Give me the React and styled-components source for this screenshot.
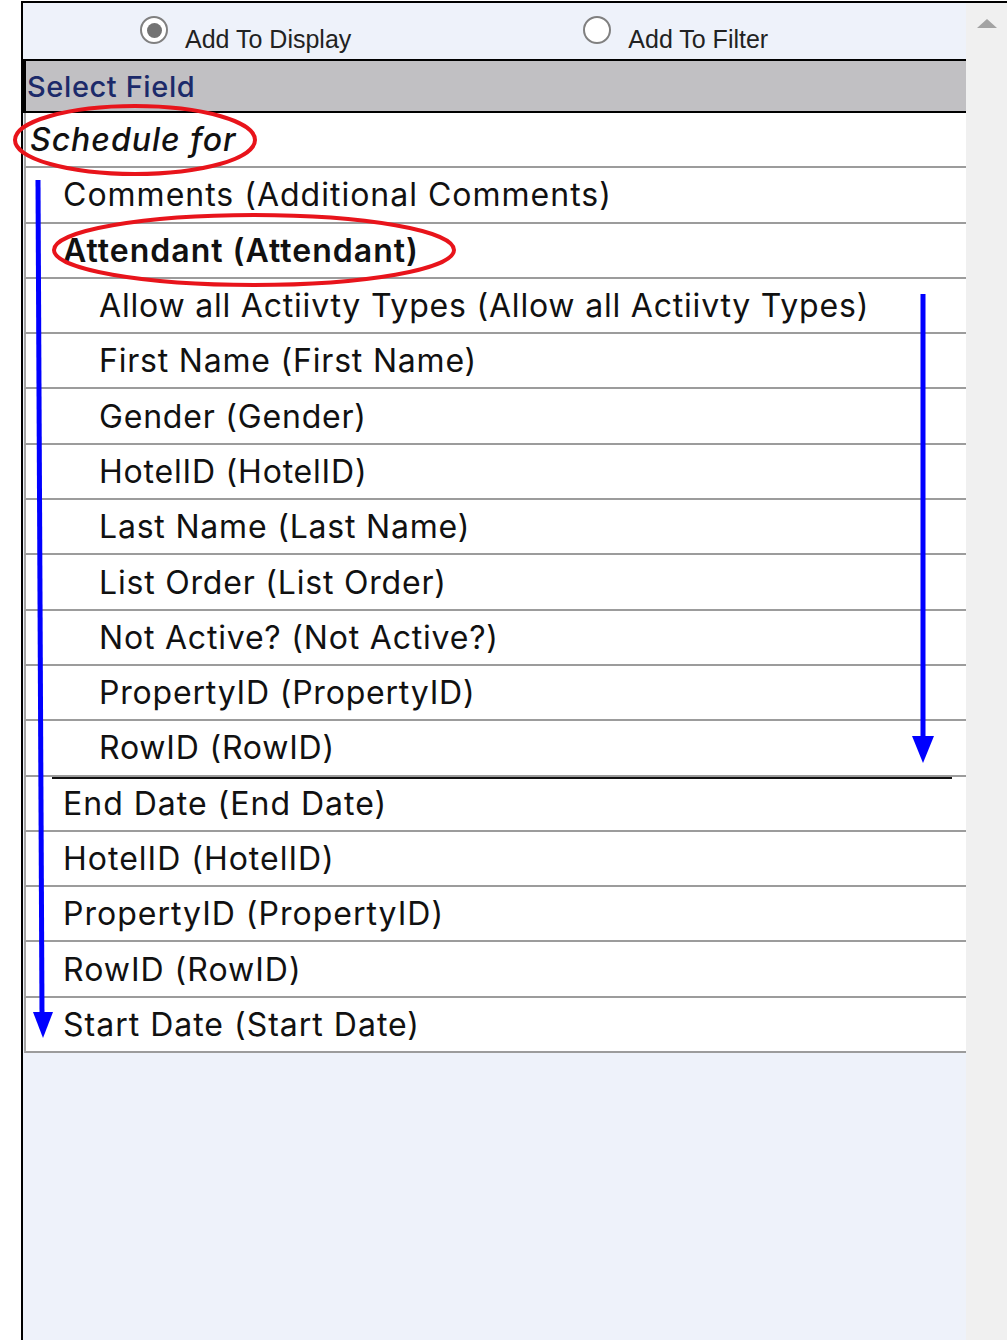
import styled, { createGlobalStyle } from "styled-components";

const GlobalStyle = createGlobalStyle`
  html, body {
    margin: 0;
    padding: 0;
    background: #ffffff;
  }
`;

const fields = [
  { label: "Schedule for", kind: "title" },
  { label: "Comments (Additional Comments)", level: 1 },
  { label: "Attendant (Attendant)", level: 1, bold: true },
];

const attendantFields = [
  "Allow all Actiivty Types (Allow all Actiivty Types)",
  "First Name (First Name)",
  "Gender (Gender)",
  "HotelID (HotelID)",
  "Last Name (Last Name)",
  "List Order (List Order)",
  "Not Active? (Not Active?)",
  "PropertyID (PropertyID)",
  "RowID (RowID)",
];

const scheduleFields = [
  "End Date (End Date)",
  "HotelID (HotelID)",
  "PropertyID (PropertyID)",
  "RowID (RowID)",
  "Start Date (Start Date)",
];

const App = () => {
  return (
    <Page>
      <GlobalStyle />
      <Frame>
        <Main>
          <RadioBar>
            <Option>
              <Radio checked />
              <OptionText>Add To Display</OptionText>
            </Option>
            <Option>
              <Radio />
              <OptionText>Add To Filter</OptionText>
            </Option>
          </RadioBar>
          <Header>Select Field</Header>
          <List>
            {fields.map((f) => (
              <Row key={f.label} level={f.level} kind={f.kind} bold={f.bold}>
                {f.label}
              </Row>
            ))}
            <Group>
              {attendantFields.map((label) => (
                <Row key={label} level={2}>
                  {label}
                </Row>
              ))}
            </Group>
            {scheduleFields.map((label) => (
              <Row key={label} level={1}>
                {label}
              </Row>
            ))}
          </List>
        </Main>
        <Scrollbar>
          <UpArrow />
        </Scrollbar>
      </Frame>

      {/* annotations drawn over the screenshot */}
      <Annotations width="1007" height="1340" viewBox="0 0 1007 1340">
        <ellipse cx="135" cy="140" rx="120" ry="34" fill="none" stroke="#e8141b" strokeWidth="4" />
        <ellipse cx="254" cy="250" rx="200" ry="35" fill="none" stroke="#e8141b" strokeWidth="4" />
        <line x1="38" y1="180" x2="42" y2="1014" stroke="#0000ff" strokeWidth="5" />
        <polygon points="33,1012 53,1012 43,1038" fill="#0000ff" />
        <line x1="923" y1="294" x2="923" y2="740" stroke="#0000ff" strokeWidth="5" />
        <polygon points="912,736 934,736 923,763" fill="#0000ff" />
      </Annotations>
    </Page>
  );
};

export default App;

const Page = styled.div`
  position: relative;
  width: 1007px;
  height: 1340px;
  padding: 1px 0 0 21px;
  box-sizing: border-box;
  overflow: hidden;
`;

const Frame = styled.div`
  display: flex;
  height: 1339px;
  border-top: 2px solid #000;
  border-left: 2px solid #000;
  box-sizing: border-box;
`;

const Main = styled.div`
  flex: 1;
  background: #eef2fa;
  display: flex;
  flex-direction: column;
`;

const RadioBar = styled.div`
  height: 56px;
  display: flex;
  align-items: flex-start;
  padding-left: 117px;
  gap: 232px;
`;

const Option = styled.label`
  display: flex;
  align-items: flex-start;
  gap: 17px;
`;

const OptionText = styled.span`
  padding-top: 24px;
  font-family: "Liberation Sans", Arial, sans-serif;
  font-size: 25px;
  line-height: 1;
  color: #222;
`;

const Radio = styled.span`
  margin-top: 13px;
  width: 28px;
  height: 28px;
  box-sizing: border-box;
  border-radius: 50%;
  border: 2px solid #808080;
  background: #fff;
  display: flex;
  align-items: center;
  justify-content: center;

  &::after {
    content: "";
    display: ${(p) => (p.checked ? "block" : "none")};
    width: 15px;
    height: 15px;
    border-radius: 50%;
    background: #737373;
  }
`;

const Header = styled.div`
  height: 50px;
  border-top: 2px solid #000;
  border-bottom: 2px solid #000;
  border-left: 3px solid #000;
  background: #c1c0c3;
  display: flex;
  align-items: center;
  padding-left: 1px;
  font-family: Inter, "Noto Sans", sans-serif;
  font-weight: 500;
  font-size: 29px;
  letter-spacing: 0.6px;
  color: #1c2a6a;
`;

const List = styled.div`
  margin-left: 1px;
`;

const Group = styled.div`
  position: relative;

  &::after {
    content: "";
    position: absolute;
    left: 28px;
    right: 14px;
    bottom: -2px;
    height: 2px;
    background: #111;
  }
`;

const Row = styled.div`
  height: 53.3px;
  background: #fff;
  border-left: 2px solid #a6a6a6;
  border-bottom: 2px solid #9c9c9c;
  display: flex;
  align-items: center;
  white-space: nowrap;
  font-family: Inter, "Noto Sans", sans-serif;
  font-size: 32px;
  letter-spacing: ${(p) => (p.level === 2 ? "0.8px" : "1px")};
  color: #111;
  padding-left: ${(p) =>
    p.kind === "title" ? "4px" : p.level === 2 ? "73px" : "37px"};
  font-weight: ${(p) => (p.bold ? 600 : p.kind === "title" ? 500 : 400)};
  font-style: ${(p) => (p.kind === "title" ? "italic" : "normal")};
`;

const Scrollbar = styled.div`
  width: 41px;
  background: #f0f0f0;
  display: flex;
  justify-content: center;
  padding-top: 16px;
  box-sizing: border-box;
`;

const UpArrow = styled.div`
  width: 0;
  height: 0;
  border-left: 10px solid transparent;
  border-right: 10px solid transparent;
  border-bottom: 9px solid #a3a3a3;
`;

const Annotations = styled.svg`
  position: absolute;
  top: 0;
  left: 0;
  pointer-events: none;
`;
